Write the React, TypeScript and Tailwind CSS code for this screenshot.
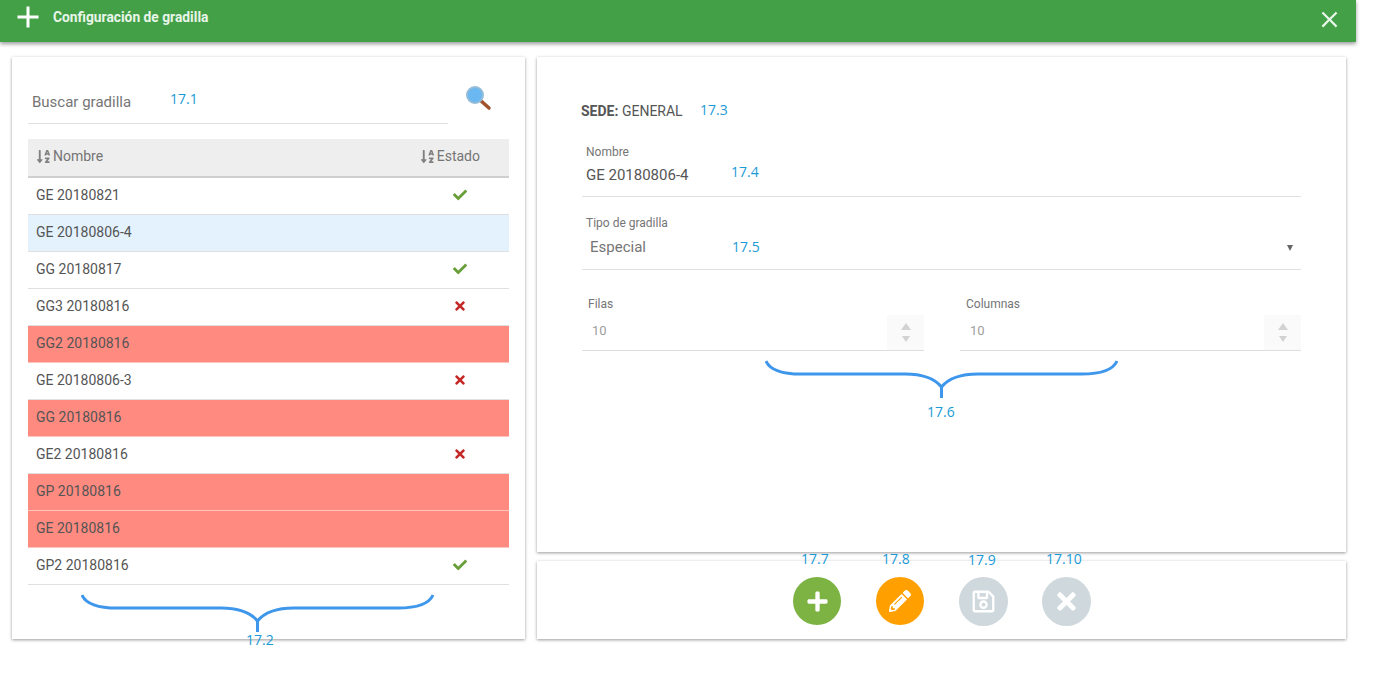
import { FaCheck, FaPencilAlt, FaPlus, FaRegSave, FaSortAlphaDown, FaTimes } from 'react-icons/fa';
import { MdAdd, MdClose } from 'react-icons/md';

const ROWS = [
  { name: 'GE 20180821', status: 'ok', tone: 'plain' },
  { name: 'GE 20180806-4', status: '', tone: 'selected' },
  { name: 'GG 20180817', status: 'ok', tone: 'plain' },
  { name: 'GG3 20180816', status: 'bad', tone: 'plain' },
  { name: 'GG2 20180816', status: '', tone: 'red' },
  { name: 'GE 20180806-3', status: 'bad', tone: 'plain' },
  { name: 'GG 20180816', status: '', tone: 'red' },
  { name: 'GE2 20180816', status: 'bad', tone: 'plain' },
  { name: 'GP 20180816', status: '', tone: 'red' },
  { name: 'GE 20180816', status: '', tone: 'red' },
  { name: 'GP2 20180816', status: 'ok', tone: 'plain' },
];

const toneClass = (t: string) =>
  t === 'selected' ? 'bg-[#e3f2fd] border-[#e0e0e0]' : t === 'red' ? 'bg-[#ff8a80] border-[#ffc4be]' : 'bg-white border-[#e0e0e0]';

// blue annotation labels drawn over the screenshot
function Note({ text, className }: { text: string; className: string }) {
  return <span className={`absolute text-[14px] leading-[16px] text-[#1a9ad6] font-['Open_Sans',sans-serif] ${className}`}>{text}</span>;
}

function Brace({ className }: { className: string }) {
  return (
    <svg className={`absolute ${className}`} width="354" height="38" viewBox="0 0 354 38" fill="none" stroke="#3f97ec" strokeWidth="3">
      <path d="M1 1 C5 10 18 14 36 14 L140 14 C158 14 170 19 176.5 27 C183 19 195 14 213 14 L317 14 C335 14 348 10 352 1" />
      <path d="M176.5 25 L176.5 38" />
    </svg>
  );
}

function NumberField({ label, className }: { label: string; className: string }) {
  return (
    <div className={`relative h-[56px] border-b border-[#dedede] ${className}`}>
      <div className="pl-[6px] pt-[1px] text-[12px] leading-[16px] text-[#757575]">{label}</div>
      <div className="pl-[10px] pt-[10px] text-[13px] leading-[18px] text-[#9e9e9e]">10</div>
      <div className="absolute right-0 bottom-0 w-[37px] h-[35px] bg-[#fafafa] flex flex-col items-center justify-center gap-[6px]">
        <span className="w-0 h-0 border-x-[5px] border-x-transparent border-b-[7px] border-b-[#d2d2d2]" />
        <span className="w-0 h-0 border-x-[4px] border-x-transparent border-t-[6px] border-t-[#d2d2d2]" />
      </div>
    </div>
  );
}

export default function App() {
  return (
    <div className="relative w-[1377px] h-[684px] overflow-hidden bg-white font-['Roboto',sans-serif] text-[#555]">
      {/* Header */}
      <div className="w-[1356px] h-[42px] bg-[#43a047] shadow-[0_2px_4px_rgba(0,0,0,0.4)] flex items-center justify-between pl-[10px] pr-[13px] text-white">
        <div className="flex items-center gap-[7px] -mt-[8px]">
          <MdAdd size={36} />
          <span className="text-[13.8px] font-bold text-[#e8f5e9]">Configuración de gradilla</span>
        </div>
        <MdClose size={27} className="-mt-[4px] text-[#e8f5e9]" />
      </div>

      <div className="flex gap-[12px] pl-[12px] pt-[15px]">
        {/* Left list */}
        <div className="w-[513px] h-[582px] bg-white px-[16px] shadow-[0_1px_3px_rgba(0,0,0,0.4)]">
          <div className="flex">
            <div className="w-[420px] h-[67px] border-b border-[#e0e0e0] pl-[4px] pt-[35px] text-[15px] leading-[20px] text-[#757575]">Buscar gradilla</div>
            <svg className="ml-[17px] mt-[28px]" width="28" height="27" viewBox="0 0 28 27">
              <path d="M15 15 L24 23" stroke="#a0522d" strokeWidth="3.5" strokeLinecap="round" />
              <circle cx="10" cy="10" r="8" fill="#6ab7f2" stroke="#93bcd8" strokeWidth="2" />
            </svg>
          </div>
          <div className="mt-[15px] h-[39px] pb-[3px] bg-[#eeeeee] border-b-2 border-[#cfcfcf] flex items-center justify-between pl-[8px] pr-[29px] text-[14px] text-[#757575]">
            <span className="flex items-center gap-[2px]"><FaSortAlphaDown size={15} className="text-[#808080]" />Nombre</span>
            <span className="flex items-center gap-[2px]"><FaSortAlphaDown size={15} className="text-[#808080]" />Estado</span>
          </div>
          {ROWS.map((r) => (
            <div key={r.name} className={`h-[37px] pb-[2px] border-b flex items-center justify-between pl-[8px] pr-[42px] text-[14px] text-[#555] ${toneClass(r.tone)}`}>
              <span>{r.name}</span>
              {r.status === 'ok' && <FaCheck size={14} className="text-[#689f38]" />}
              {r.status === 'bad' && <FaTimes size={14} className="text-[#c62828]" />}
            </div>
          ))}
        </div>

        <div className="flex flex-col gap-[9px]">
          {/* Detail form */}
          <div className="w-[809px] h-[495px] bg-white pl-[45px] pr-[45px] shadow-[0_1px_3px_rgba(0,0,0,0.4)]">
            <div className="pt-[45px] -ml-px text-[14px] leading-[18px] text-[#555]"><b>SEDE:</b> GENERAL</div>
            <div className="mt-[14px] h-[63px] border-b border-[#e0e0e0] pl-[4px] pt-[10px]">
              <div className="text-[12px] leading-[16px] text-[#757575]">Nombre</div>
              <div className="pt-[5px] text-[15px] leading-[20px] text-[#555]">GE 20180806-4</div>
            </div>
            <div className="relative h-[73px] border-b border-[#e0e0e0] pl-[4px] pt-[18px]">
              <div className="text-[12px] leading-[16px] text-[#757575]">Tipo de gradilla</div>
              <div className="pl-[4px] pt-[6px] text-[15px] leading-[20px] text-[#757575]">Especial</div>
              <span className="absolute right-[8px] top-[48px] w-0 h-0 border-x-[3px] border-x-transparent border-t-[6px] border-t-[#666]" />
            </div>
            <div className="flex gap-[36px] mt-[25px]">
              <NumberField label="Filas" className="w-[342px]" />
              <NumberField label="Columnas" className="w-[341px]" />
            </div>
          </div>

          {/* Actions */}
          <div className="w-[809px] h-[78px] bg-white shadow-[0_1px_3px_rgba(0,0,0,0.4)] flex items-start justify-center pl-[1px] pt-[16px]">
            <button className="w-[48px] h-[48px] rounded-full bg-[#7cb342] text-white flex items-center justify-center"><FaPlus size={23} /></button>
            <button className="ml-[35px] w-[48px] h-[48px] rounded-full bg-[#ffa000] text-white flex items-center justify-center"><FaPencilAlt size={22} /></button>
            <button className="ml-[35px] w-[49px] h-[49px] rounded-full bg-[#cfd8dc] text-white flex items-center justify-center"><FaRegSave size={25} /></button>
            <button className="ml-[34px] w-[49px] h-[49px] rounded-full bg-[#cfd8dc] text-white flex items-center justify-center"><FaTimes size={27} /></button>
          </div>
        </div>
      </div>

      {/* Annotations */}
      <Note text="17.1" className="left-[170px] top-[91px]" />
      <Note text="17.2" className="left-[246px] top-[632px]" />
      <Note text="17.3" className="left-[700px] top-[102px]" />
      <Note text="17.4" className="left-[731px] top-[164px]" />
      <Note text="17.5" className="left-[732px] top-[239px]" />
      <Note text="17.6" className="left-[927px] top-[404px]" />
      <Note text="17.7" className="left-[801px] top-[551px]" />
      <Note text="17.8" className="left-[882px] top-[551px]" />
      <Note text="17.9" className="left-[968px] top-[552px]" />
      <Note text="17.10" className="left-[1046px] top-[551px]" />
      <Brace className="left-[81px] top-[594px]" />
      <Brace className="left-[765px] top-[360px]" />
    </div>
  );
}
